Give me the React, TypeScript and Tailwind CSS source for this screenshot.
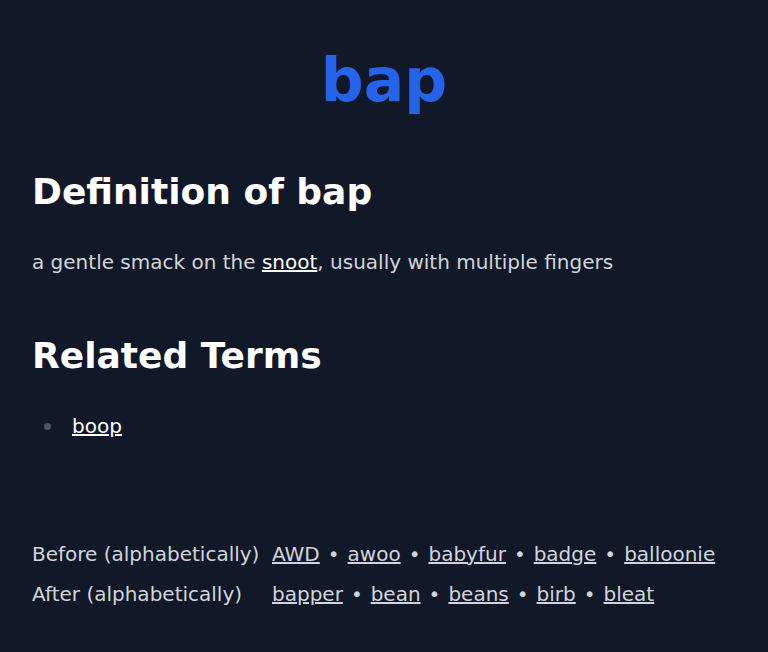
const before = ['AWD', 'awoo', 'babyfur', 'badge', 'balloonie'];
const after = ['bapper', 'bean', 'beans', 'birb', 'bleat'];

function TermLinks({ terms }: { terms: string[] }) {
  return (
    <div className="flex items-center">
      {terms.map((t, i) => (
        <span key={t} className="flex items-center">
          {i > 0 && <span className="px-2">•</span>}
          <a href="#" className="underline">
            {t}
          </a>
        </span>
      ))}
    </div>
  );
}

export default function App() {
  return (
    <div
      className="min-h-[652px] bg-[#111827] px-8 pt-[50px] pb-10 text-[#d1d5db]"
      style={{ fontFamily: '"DejaVu Sans", sans-serif' }}
    >
      {/* Term title */}
      <h1 className="text-center text-6xl leading-[60px] font-bold text-[#2563eb]">bap</h1>

      {/* Definition */}
      <h2 className="mt-[62px] text-4xl font-bold text-white">Definition of bap</h2>
      <p className="mt-9 text-xl">
        a gentle smack on the{' '}
        <a href="#" className="text-white underline">
          snoot
        </a>
        , usually with multiple fingers
      </p>

      {/* Related */}
      <h2 className="mt-[60px] text-4xl font-bold text-white">Related Terms</h2>
      <ul className="mt-9 pl-3 text-xl">
        <li className="flex items-center">
          <span className="mr-[21px] h-[7px] w-[7px] shrink-0 rounded-full bg-[#4b5563]" />
          <a href="#" className="text-white underline">
            boop
          </a>
        </li>
      </ul>

      {/* Neighbouring terms */}
      <div className="mt-[100px] space-y-3 text-xl">
        <div className="flex">
          <span className="w-60 shrink-0">Before (alphabetically)</span>
          <TermLinks terms={before} />
        </div>
        <div className="flex">
          <span className="w-60 shrink-0">After (alphabetically)</span>
          <TermLinks terms={after} />
        </div>
      </div>
    </div>
  );
}
